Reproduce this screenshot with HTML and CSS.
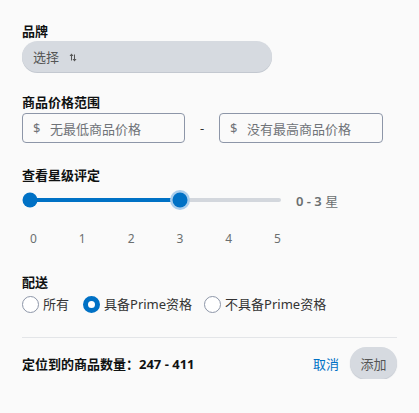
FILE: index.html
```html
<!DOCTYPE html>
<html lang="zh">
<head>
  <meta charset="UTF-8" />
  <title>筛选</title>
  <link rel="stylesheet" href="styles.css">
</head>
<body>
  <div class="panel">
    <section class="group">
      <div class="label">品牌</div>
      <button class="select">
        <span>选择</span>
        <svg class="sort-icon" width="8" height="9" viewBox="0 0 8 9">
          <path d="M2.5 0.5 L0.5 3 H2 V7.5 H3 V3 H4.5 Z" fill="#555"/>
          <path d="M5.5 8.5 L3.5 6 H5 V1.5 H6 V6 H7.5 Z" fill="#555"/>
        </svg>
      </button>
    </section>

    <section class="group price">
      <div class="label">商品价格范围</div>
      <div class="price-row">
        <label class="price-input"><span class="cur">$</span><span class="ph">无最低商品价格</span></label>
        <span class="dash">-</span>
        <label class="price-input"><span class="cur">$</span><span class="ph">没有最高商品价格</span></label>
      </div>
    </section>

    <section class="group rating">
      <div class="label">查看星级评定</div>
      <div class="slider-row">
        <svg class="slider" width="266" height="22" viewBox="0 0 266 22">
          <line x1="8" y1="11" x2="257" y2="11" stroke="#d3d7dd" stroke-width="4" stroke-linecap="round"/>
          <line x1="8" y1="11" x2="158" y2="11" stroke="#0071c5" stroke-width="4" stroke-linecap="round"/>
          <circle cx="8" cy="11" r="7.5" fill="#0071c5"/>
          <circle cx="158" cy="11" r="10" fill="#a9cdec"/>
          <circle cx="158" cy="11" r="7.5" fill="#0071c5"/>
        </svg>
        <span class="range-value"><b>0 - 3</b> 星</span>
      </div>
      <div class="ticks">
        <span>0</span><span>1</span><span>2</span><span>3</span><span>4</span><span>5</span>
      </div>
    </section>

    <section class="group delivery">
      <div class="label">配送</div>
      <div class="radios">
        <label class="radio"><span class="dot"></span>所有</label>
        <label class="radio checked"><span class="dot"></span>具备Prime资格</label>
        <label class="radio"><span class="dot"></span>不具备Prime资格</label>
      </div>
    </section>

    <hr class="divider">

    <footer class="footer">
      <span class="count">定位到的商品数量：247 - 411</span>
      <div class="actions">
        <a class="cancel">取消</a>
        <button class="add">添加</button>
      </div>
    </footer>
  </div>
</body>
</html>
```

FILE: styles.css
```css
* {
  margin: 0;
  padding: 0;
  box-sizing: border-box;
}
html, body {
  background-color: #fafafa;
  font-family: "Noto Sans", "Noto Sans CJK SC", sans-serif;
  font-size: 13px;
  color: #0f1111;
}
.panel {
  padding: 22px 22px 0;
}
.label {
  font-weight: bold;
  line-height: 18px;
  height: 18px;
}
.group + .group {
  margin-top: 21px;
}
.select {
  display: flex;
  align-items: center;
  gap: 10px;
  width: 250px;
  height: 31px;
  margin-top: 1px;
  padding: 0 11px;
  border: none;
  border-radius: 16px;
  background-color: #d6dae0;
  box-shadow: 0 1px 0 #c3c8d0;
  font-family: inherit;
  font-size: 13px;
  color: #555;
}
.sort-icon {
  margin-top: 2px;
}
.price-row {
  display: flex;
  align-items: center;
  margin-top: 2px;
}
.price-input {
  display: flex;
  align-items: center;
  height: 30px;
  padding: 0 10px;
  border: 1px solid #8d96a8;
  border-radius: 4px;
  color: #6f7378;
}
.price-input:first-child {
  width: 163px;
}
.price-input:last-child {
  width: 164px;
}
.cur {
  width: 17px;
}
.dash {
  width: 34px;
  text-align: center;
  color: #333;
}
.group.rating {
  margin-top: 23px;
}
.slider-row {
  display: flex;
  align-items: center;
  margin-top: 5px;
}
.slider {
  display: block;
}
.range-value {
  margin-left: 8px;
  color: #6b6f70;
}
.range-value b {
  font-weight: 600;
}
.ticks {
  display: flex;
  justify-content: space-between;
  width: 251px;
  margin: 20px 0 0 8px;
  line-height: 16px;
  font-size: 12px;
  color: #6b6f70;
}
.group.delivery {
  margin-top: 26px;
}
.radios {
  display: flex;
  align-items: center;
  gap: 14px;
  margin-top: 4px;
  line-height: 18px;
  color: #333;
}
.radio {
  display: flex;
  align-items: center;
  gap: 4px;
}
.dot {
  width: 17px;
  height: 17px;
  border-radius: 50%;
  border: 1.5px solid #8d96a8;
  background: #fff;
}
.radio.checked .dot {
  border: 5px solid #0071c5;
}
.radio:last-child {
  margin-left: -2px;
}
.divider {
  margin-top: 24px;
  border: none;
  border-top: 1px solid #e3e5e8;
}
.footer {
  display: flex;
  align-items: center;
  justify-content: space-between;
  margin-top: 9px;
}
.count {
  font-weight: bold;
}
.actions {
  display: flex;
  align-items: center;
  gap: 11px;
}
.cancel {
  color: #0071c5;
  cursor: pointer;
}
.add {
  width: 47px;
  height: 32px;
  border: none;
  border-radius: 16px;
  background-color: #d6dae0;
  box-shadow: 0 1px 1px #c3c8d0;
  font-family: inherit;
  font-size: 13px;
  color: #555;
}
```
